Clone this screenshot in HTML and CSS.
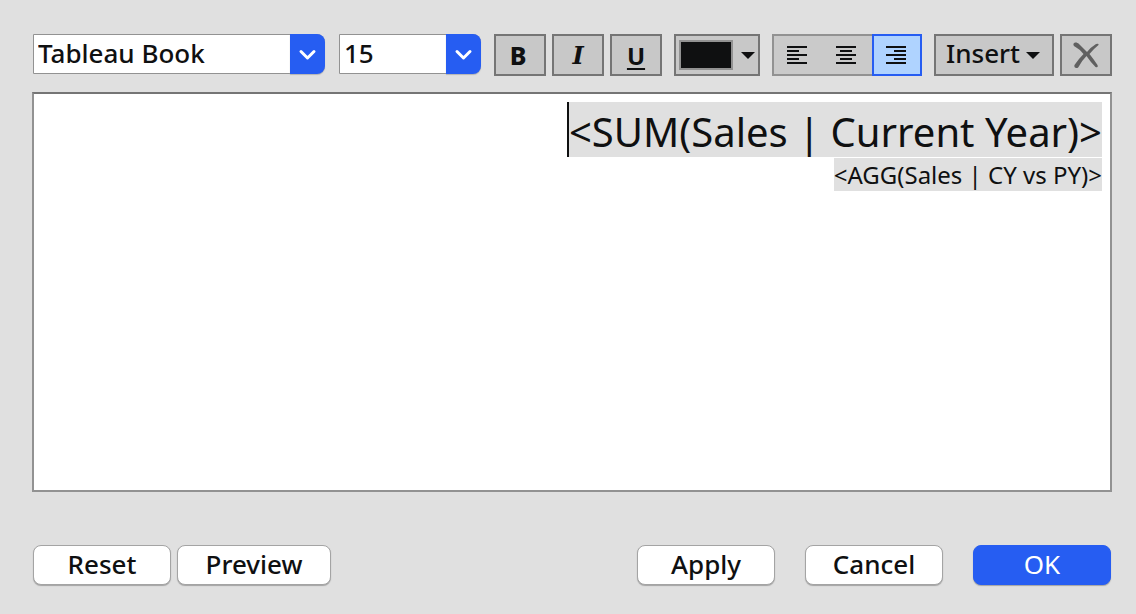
FILE: index.html
```html
<!DOCTYPE html>
<html lang="en">
<head>
<meta charset="utf-8">
<meta name="viewport" content="width=device-width, initial-scale=1">
<title>Edit Label</title>
<link rel="stylesheet" href="styles.css">
</head>
<body>
<main class="dialog">
  <div class="toolbar" role="toolbar" aria-label="Formatting">
    <div class="combos">
      <div class="combo combo-font">
        <select class="combo-select" aria-label="Font"><option>Tableau Book</option></select>
        <svg class="combo-arrow" viewBox="0 0 35 40" aria-hidden="true"><path d="M11 17.500l6.500 6.500 6.500-6.500"/></svg>
      </div>
      <div class="combo combo-size">
        <select class="combo-select" aria-label="Font size"><option>15</option></select>
        <svg class="combo-arrow" viewBox="0 0 35 40" aria-hidden="true"><path d="M11 17.500l6.500 6.500 6.500-6.500"/></svg>
      </div>
    </div>
    <div class="group">
      <button class="tool bold" type="button" aria-label="Bold">B</button>
      <button class="tool italic" type="button" aria-label="Italic">I</button>
      <button class="tool underline" type="button" aria-label="Underline">U</button>
    </div>
    <button class="tool color" type="button" aria-label="Text color">
      <span class="swatch"></span>
      <svg class="caret-down" viewBox="0 0 14 7" aria-hidden="true"><path d="M0 0h14L7 7z"/></svg>
    </button>
    <div class="align">
      <button class="align-btn" type="button" aria-label="Align left">
        <svg class="lines" viewBox="0 0 20 18" aria-hidden="true"><path d="M0 0h20v2H0zM0 4h12v2H0zM0 8h20v2H0zM0 12h12v2H0zM0 16h20v2H0z"/></svg>
      </button>
      <button class="align-btn" type="button" aria-label="Align center">
        <svg class="lines" viewBox="0 0 20 18" aria-hidden="true"><path d="M0 0h20v2H0zM4 4h12v2H4zM0 8h20v2H0zM4 12h12v2H4zM0 16h20v2H0z"/></svg>
      </button>
      <button class="align-btn selected" type="button" aria-label="Align right" aria-pressed="true">
        <svg class="lines" viewBox="0 0 20 18" aria-hidden="true"><path d="M0 0h20v2H0zM8 4h12v2H8zM0 8h20v2H0zM8 12h12v2H8zM0 16h20v2H0z"/></svg>
      </button>
    </div>
    <div class="group">
      <button class="tool insert" type="button">Insert
        <svg class="caret-down" viewBox="0 0 14 7" aria-hidden="true"><path d="M0 0h14L7 7z"/></svg>
      </button>
      <button class="tool" type="button" aria-label="Clear">
        <svg class="cross" viewBox="0 0 26 26" aria-hidden="true"><path d="M.5 2C1 0 4 0 6 2q4 4 8 8 4-5 9-8 3-1 2.500 1-5 4-9 9 4 5 8 11 1 3-2 2-5-5-9-11-5 5-8 11c-1 2-5 1-4-2q4-6 9-11-4-5-8-7Q0 4 .5 2z"/></svg>
      </button>
    </div>
  </div>

  <div class="editor" role="textbox" aria-multiline="true" aria-label="Label text" contenteditable="true" spellcheck="false">
    <div class="line"><span class="field field-large">&lt;SUM(Sales | Current Year)&gt;</span></div>
    <div class="line"><span class="field field-small">&lt;AGG(Sales | CY vs PY)&gt;</span></div>
  </div>

  <div class="footer">
    <div class="footer-left">
      <button class="push" type="button">Reset</button>
      <button class="push push-wide" type="button">Preview</button>
    </div>
    <div class="footer-right">
      <button class="push" type="button">Apply</button>
      <button class="push" type="button">Cancel</button>
      <button class="push primary" type="button">OK</button>
    </div>
  </div>
</main>
</body>
</html>
```
FILE: styles.css
```css
* { box-sizing: border-box; }

body {
  margin: 0;
  background: #e0e0e0;
  color: #0f1011;
  font-family: "Noto Sans", "Open Sans", sans-serif;
  font-size: 26px;
  font-weight: 500;
}

button, select { color: inherit; font: inherit; }

svg { display: block; flex: none; }

.dialog {
  display: flex;
  flex-direction: column;
  min-height: 100vh;
  padding: 34px 24px 29px 32px;
}

.toolbar {
  display: flex;
  justify-content: space-between;
  gap: 12px;
  padding-left: 1px;
}

.combos { display: flex; gap: 14px; margin-right: 1px; }

.combo { position: relative; height: 40px; }
.combo-font { width: 292px; }
.combo-size { width: 142px; }

.combo-select {
  appearance: none;
  width: 100%;
  height: 40px;
  padding: 0 40px 2px 4px;
  border: 1px solid #929292;
  border-radius: 0 8px 8px 0;
  background: #fff;
  line-height: 36px;
}

.combo-arrow {
  position: absolute;
  top: 0;
  right: 0;
  width: 35px;
  height: 40px;
  border-radius: 0 8px 8px 0;
  background: #265df2;
  box-shadow: 0 1px 1px #b4b4b4;
  pointer-events: none;
}

.combo-arrow path {
  fill: none;
  stroke: #fff;
  stroke-width: 3;
  stroke-linecap: round;
  stroke-linejoin: round;
}

.group { display: flex; gap: 6px; }

.tool {
  display: flex;
  align-items: center;
  justify-content: center;
  width: 52px;
  height: 42px;
  padding: 0;
  border: 2px solid #757575;
  background: #c8c8c8;
}

.bold { padding-right: 4px; font-size: 25px; font-weight: 800; }
.italic { font-family: "DejaVu Serif", serif; font-size: 24px; font-style: italic; font-weight: 700; }
.underline {
  font-weight: 700;
  font-size: 24px;
  text-decoration: underline;
  text-decoration-thickness: 2px;
  text-underline-offset: 3px;
}

.color { gap: 8px; width: 86px; }

.swatch {
  width: 54px;
  height: 30px;
  border: 2px solid #929292;
  background: #0f1011;
}

.caret-down { width: 14px; height: 7px; fill: #0f1011; }

.align {
  display: flex;
  height: 42px;
  border: 2px solid #929292;
  border-right: 0;
  background: #cacaca;
}

.align-btn {
  display: flex;
  align-items: center;
  justify-content: center;
  width: 50px;
  padding: 0 2px 0 0;
  border: 0;
  background: none;
}

.align-btn:first-child { width: 48px; }

.align-btn.selected {
  margin: -2px 0;
  padding: 0 2px 0 0;
  border: 2px solid #265df2;
  background: #afd3ff;
}

.lines { width: 20px; height: 18px; fill: #0f1011; }

.insert { gap: 6px; width: 120px; padding: 0 2px 4px 0; }
.insert .caret-down { margin-top: 4px; }

.cross { width: 26px; height: 26px; fill: #606060; }

.editor {
  flex: 1;
  margin-top: 16px;
  padding: 8px;
  border: 2px solid #929292;
  border-top-color: #757575;
  background: #fff;
  font-weight: 400;
  text-align: right;
  outline: none;
}

.line { display: flex; justify-content: flex-end; }
.line + .line { margin-top: 1px; }

.field { background: #e0e0e0; white-space: nowrap; }

.field-large {
  padding-top: 4px;
  border-left: 2px solid #0f1011;
  font-size: 40px;
  line-height: 51px;
}

.field-small {
  font-size: 24px;
  line-height: 33px;
}

.footer {
  display: flex;
  justify-content: space-between;
  margin-top: 53px;
  padding: 0 1px;
}

.footer-left { display: flex; gap: 6px; }
.footer-right { display: flex; gap: 30px; }

.push {
  width: 138px;
  height: 40px;
  padding: 0 0 2px;
  border: 1px solid #a4a4a4;
  border-radius: 8px;
  background: #fff;
  box-shadow: 0 1px 1px #a4a4a4;
  line-height: 36px;
}

.push-wide { width: 154px; }

.primary {
  border-color: #265df2;
  background: #265df2;
  color: #fff;
  font-weight: 400;
}
```
